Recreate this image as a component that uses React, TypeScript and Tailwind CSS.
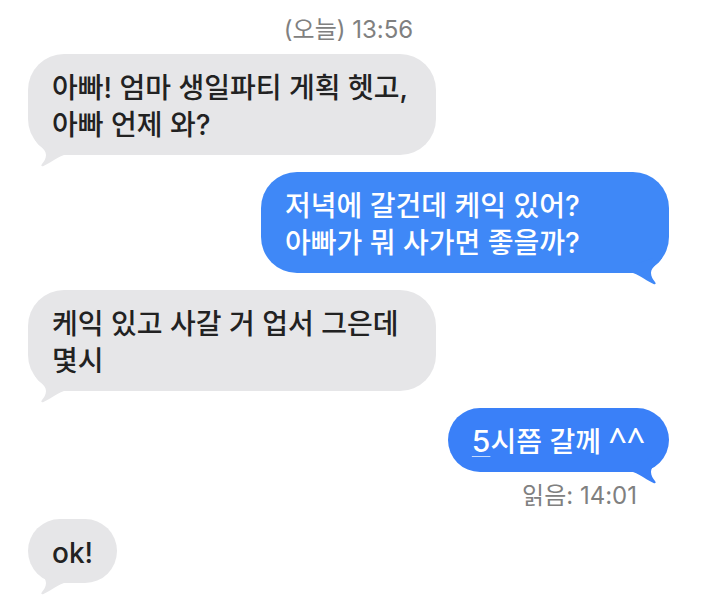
import React from 'react';
import clsx from 'clsx';

type Message = {
  id: number;
  from: 'me' | 'them';
  text: React.ReactNode;
  shade: string;
  tail: string;
  receipt?: string;
};

const messages: Message[] = [
  {
    id: 1,
    from: 'them',
    text: '아빠! 엄마 생일파티 게획 헷고, 아빠 언제 와?',
    shade: 'bg-[#e6e6e8] text-[#222222]',
    tail: 'text-[#e6e6e8]',
  },
  {
    id: 2,
    from: 'me',
    text: '저녁에 갈건데 케익 있어? 아빠가 뭐 사가면 좋을까?',
    shade: 'bg-[#3f88f7] text-white',
    tail: 'text-[#3f88f7]',
  },
  {
    id: 3,
    from: 'them',
    text: '케익 있고 사갈 거 업서 그은데 몇시',
    shade: 'bg-[#e6e6e8] text-[#222222]',
    tail: 'text-[#e6e6e8]',
  },
  {
    id: 4,
    from: 'me',
    text: (
      <>
        <span className="text-[30px] leading-none underline decoration-white/70 decoration-1 underline-offset-4">
          5
        </span>
        시쯤 갈께{' '}
        <span className="font-['Noto_Sans',sans-serif] text-[32px] leading-none">^^</span>
      </>
    ),
    shade: 'bg-[#3a80f8] text-white',
    tail: 'text-[#3a80f8]',
    receipt: '읽음: 14:01',
  },
  {
    id: 5,
    from: 'them',
    text: 'ok!',
    shade: 'bg-[#e6e6e8] text-[#222222]',
    tail: 'text-[#e6e6e8]',
  },
];

function Tail({ message }: { message: Message }) {
  return (
    <svg
      className={clsx(
        'absolute -bottom-3 h-7 w-10',
        message.from === 'me' ? 'right-0 -scale-x-100' : 'left-0',
        message.tail
      )}
      viewBox="0 0 40 28"
      fill="currentColor"
      aria-hidden="true"
    >
      <path d="M7 1C10 7 18 9.500 18 16C18 19.500 16 22.500 14 25C12.600 26.800 13.600 27.800 15.500 27C22 24.200 27 19.500 36 16V8L16 1Z" />
    </svg>
  );
}

function Bubble({ message }: { message: Message }) {
  return (
    <li className={clsx('flex flex-col', message.from === 'me' ? 'items-end' : 'items-start')}>
      <div
        className={clsx(
          'relative max-w-[408px] rounded-[36px] px-6 pt-4 pb-[11px]',
          message.shade
        )}
      >
        <Tail message={message} />
        <p className="relative break-keep text-[28px] leading-[37px] font-medium">{message.text}</p>
      </div>
      {message.receipt && (
        <p className="-mb-[6px] pt-3 pr-8 text-[24px] leading-6 text-[#808080]">{message.receipt}</p>
      )}
    </li>
  );
}

export default function App() {
  return (
    <main className="min-h-screen bg-white pr-[35px] pl-7 font-['Inter','Noto_Sans_CJK_KR',sans-serif]">
      <p className="pt-[18px] pb-3 text-center text-[24px] leading-6 text-[#808080]">
        (오늘) 13:56
      </p>
      <ul className="flex flex-col gap-[17px]">
        {messages.map((message) => (
          <Bubble key={message.id} message={message} />
        ))}
      </ul>
    </main>
  );
}
